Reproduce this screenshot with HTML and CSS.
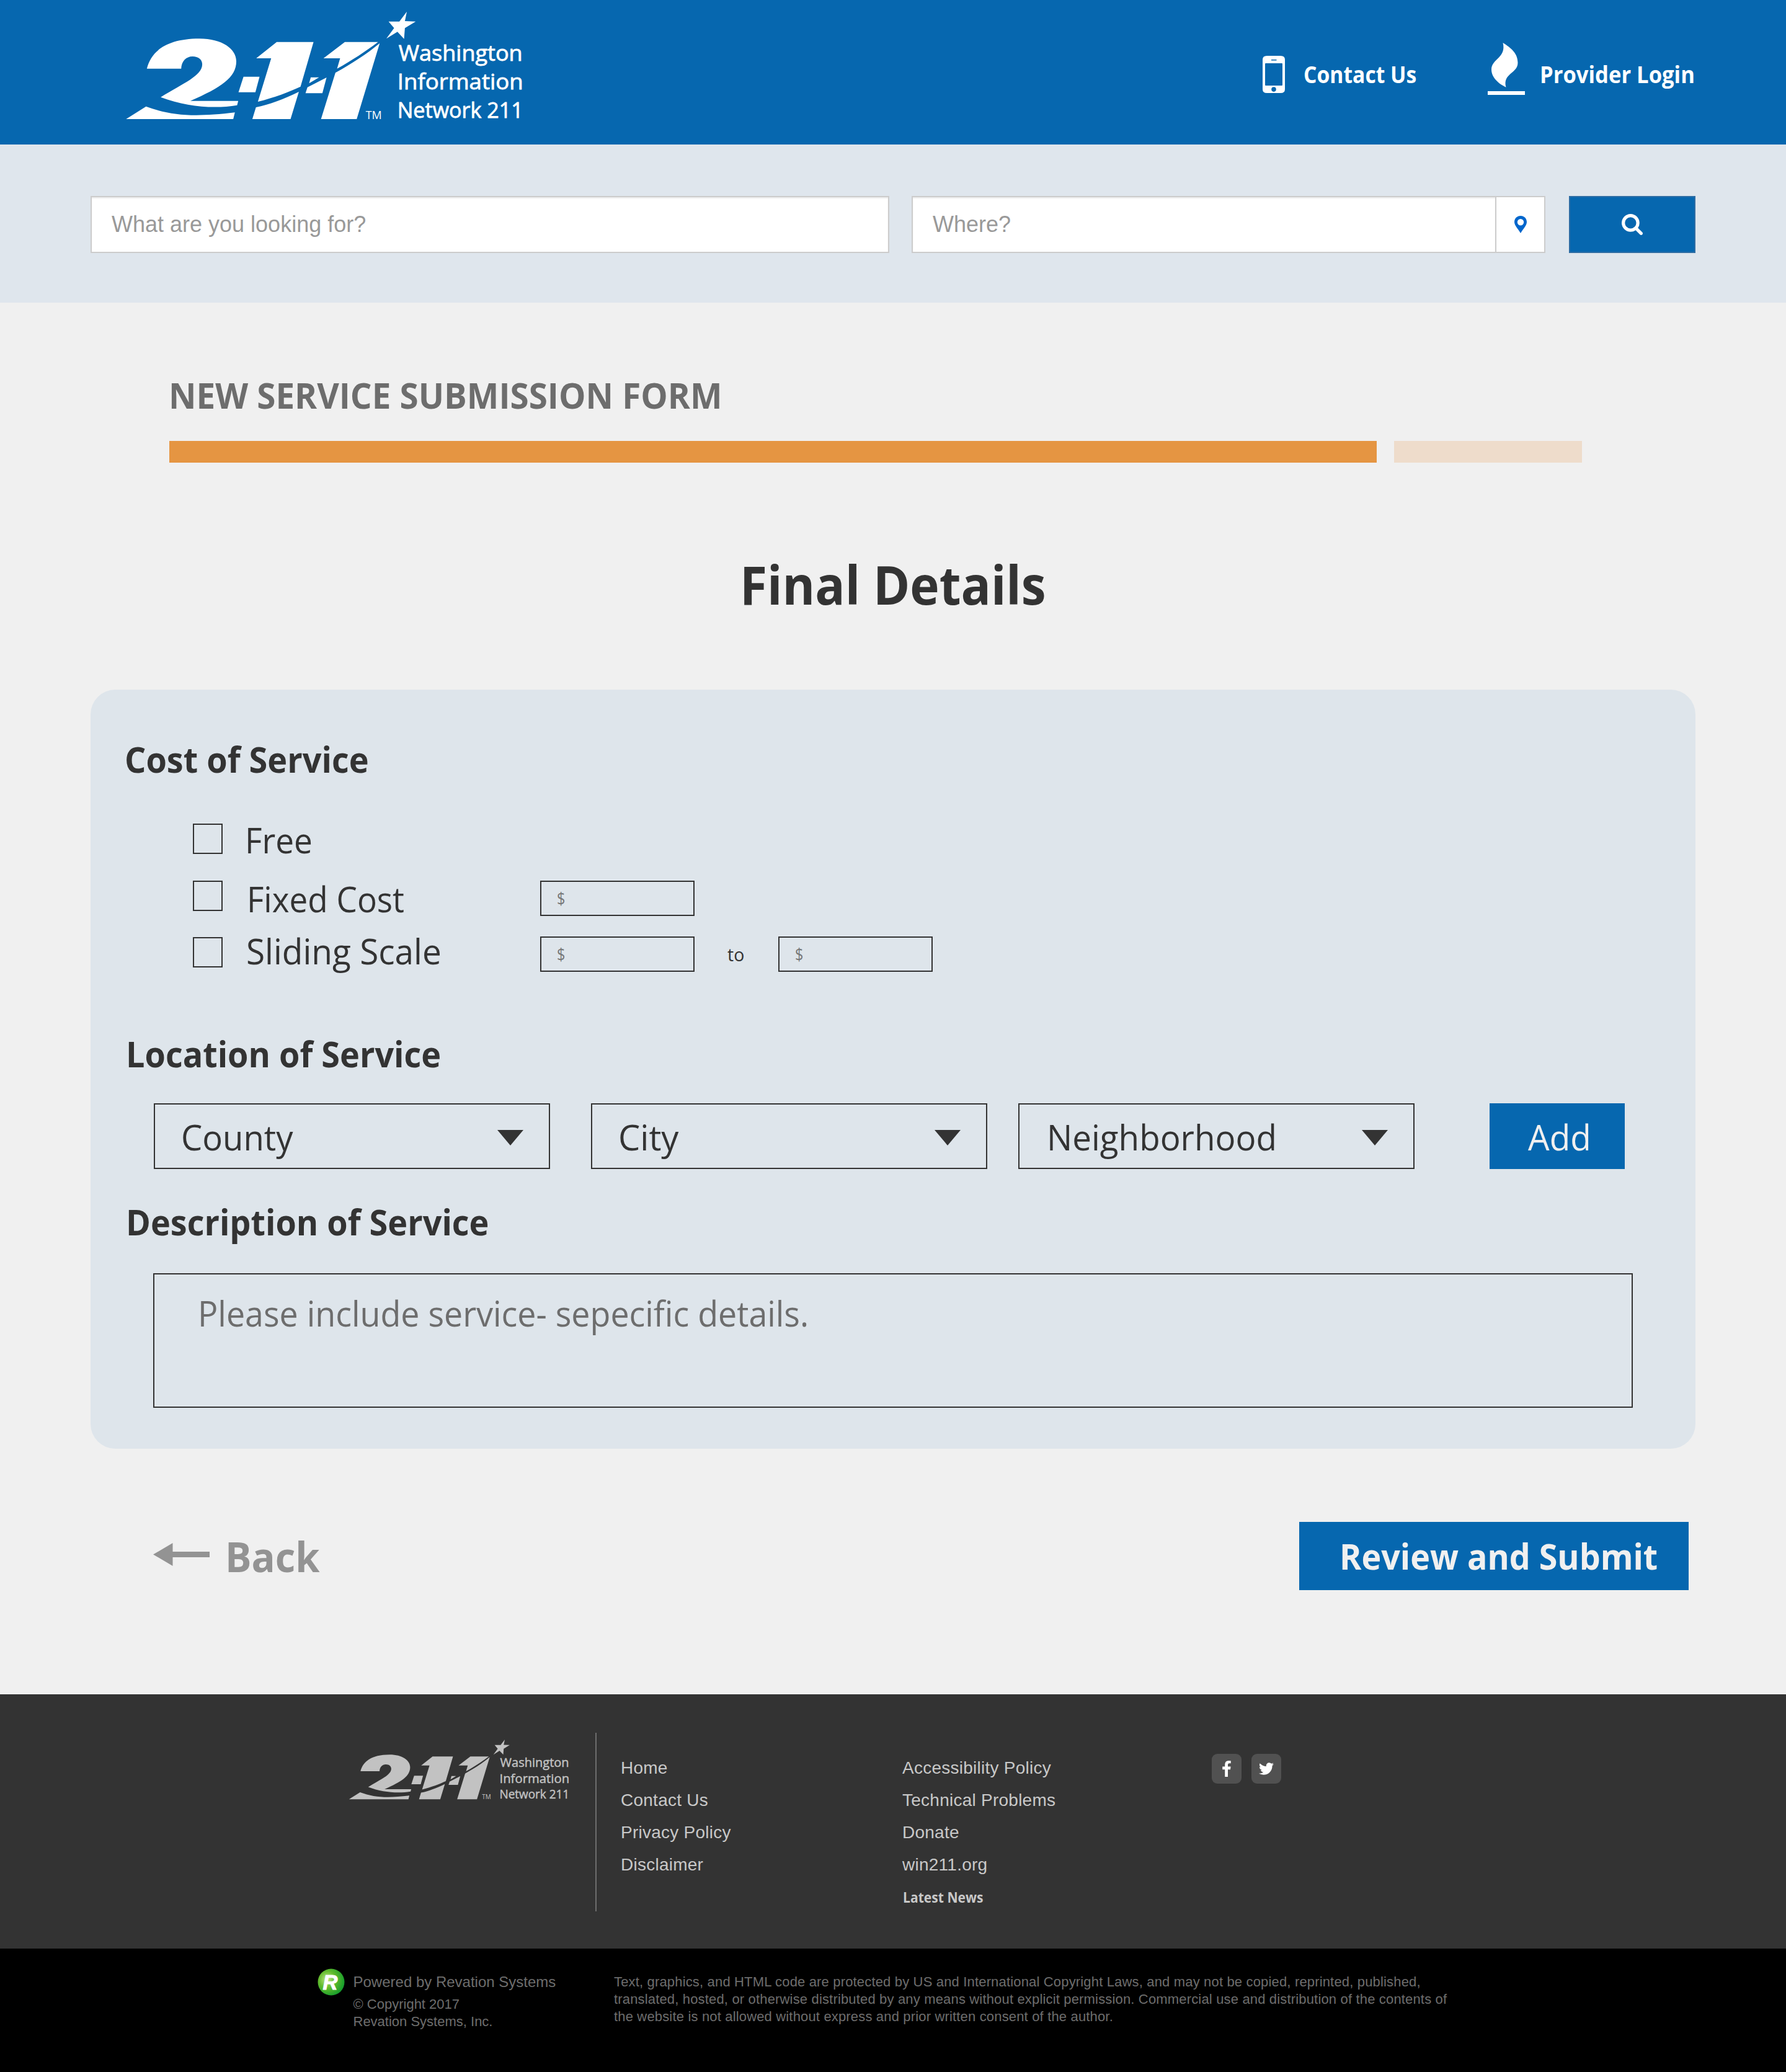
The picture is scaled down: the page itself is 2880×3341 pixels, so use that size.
FILE: index.html
```html
<!DOCTYPE html>
<html lang="en">
<head>
<meta charset="utf-8">
<title>New Service Submission Form</title>
<link rel="stylesheet" href="styles.css">
</head>
<body>
<svg class="defs" aria-hidden="true">
  <symbol id="logo" viewBox="50 50 1440 530" preserveAspectRatio="none">
    <g fill="currentColor">
      <path d="M128 331C143 250 196 186 318 186C400 186 451 236 451 296C451 374 395 423 285 487L458 487L454 508C370 527 270 515 178 469C260 401 328 365 328 310C328 287 314 272 293 272C270 272 253 295 252 331Z"/>
      <path d="M53 575L125 514C220 560 300 566 446 543L440 575Z"/>
      <path d="M477 370H535L520 445H459Z"/>
      <path d="M597 202H730L683 418C640 445 590 470 529 491L577 281H523Z"/>
      <path d="M677 443L647 575H509L522 518C570 505 620 480 677 443Z"/>
      <path d="M720 373H750L714 402Z"/>
      <path d="M777 374L762 450H701L708 421Z"/>
      <path d="M843 202H963C915 250 870 290 815 331L826 281H766Z"/>
      <path d="M969 208L886 575H757L809 351C870 305 920 262 969 208Z"/>
      <path d="M1067 55L1060 101L1099 103L1060 135L1057 187L1033 153L993 186L1021 135L1001 103H1040Z"/>
      <g transform="scale(2.24 3)" font-family="'Open Sans', sans-serif">
        <g font-size="35.5" stroke="currentColor" stroke-width=".8">
          <text x="463" y="97.7" textLength="200" lengthAdjust="spacingAndGlyphs">Washington</text>
          <text x="461" y="143.7" textLength="203" lengthAdjust="spacingAndGlyphs">Information</text>
          <text x="461" y="189.7" textLength="203" lengthAdjust="spacingAndGlyphs">Network 211</text>
        </g>
        <text x="410" y="191.3" font-size="18.6" textLength="26" lengthAdjust="spacingAndGlyphs">TM</text>
      </g>
    </g>
  </symbol>
</svg>

<header class="top">
  <svg class="logo"><use href="#logo"/></svg>
  <nav class="top-nav">
    <a class="top-link">
      <svg class="phone" viewBox="0 0 36 60"><path fill="#fff" fill-rule="evenodd" d="M7 0H29Q36 0 36 6V54Q36 60 29 60H7Q0 60 0 54V6Q0 0 7 0ZM14 6V7.6H22.500V6ZM4 13V47Q4 48 5 48H31Q32 48 32 47V13Q32 12 31 12H5Q4 12 4 13ZM18 50.300A3.800 3.800 0 1 0 18 57.900A3.800 3.800 0 1 0 18 50.300Z"/></svg>
      <span class="fit contact">Contact Us</span>
    </a>
    <a class="top-link">
      <svg class="flame" viewBox="0 0 60 84"><path fill="#fff" d="M24.500 0C37.500 8 48.500 17 48.500 32C48.500 50 23.500 49 29.500 71.700C17.500 66 6 56 6 43C6 26 30.500 24 24.500 0ZM0 78H60V84H0Z"/></svg>
      <span class="fit provider">Provider Login</span>
    </a>
  </nav>
</header>

<section class="search">
  <div class="search-box what">What are you looking for?</div>
  <div class="where-group">
    <div class="search-box where">Where?</div>
    <div class="pin"><svg viewBox="0 0 20 28"><path fill="#0066cc" fill-rule="evenodd" d="M10 0C4.300 0 0 4.300 0 10C0 15.500 6 21 10 28C14 21 20 15.500 20 10C20 4.300 15.700 0 10 0ZM10 5A5.200 5.200 0 1 1 10 15.400A5.200 5.200 0 1 1 10 5Z"/></svg></div>
  </div>
  <div class="search-btn"><svg viewBox="64 128 1664 1664"><path fill="#fff" d="M1216 832q0-185-131.500-316.500t-316.500-131.500-316.500 131.500-131.500 316.500 131.500 316.500 316.500 131.500 316.500-131.500 131.500-316.500zm512 832q0 52-38 90t-90 38q-54 0-90-38l-343-342q-179 124-399 124-143 0-273.500-55.500t-225-150-150-225-55.500-273.500 55.500-273.500 150-225 225-150 273.500-55.500 273.500 55.500 225 150 150 225 55.500 273.500q0 220-124 399l343 343q37 37 37 90z"/></svg></div>
</section>

<main>
  <h1 class="form-title"><span class="fit">NEW SERVICE SUBMISSION FORM</span></h1>
  <div class="progress"><div class="done"></div><div class="left"></div></div>
  <h2 class="step-title"><span class="fit">Final Details</span></h2>

  <section class="panel">
    <h3 class="cost-title"><span class="fit">Cost of Service</span></h3>
    <div class="costs">
      <div class="cost free"><i class="check"></i><span class="fit label">Free</span></div>
      <div class="cost fixed"><i class="check"></i><span class="fit label">Fixed Cost</span><div class="money"><span class="fit">$</span></div></div>
      <div class="cost sliding"><i class="check"></i><span class="fit label">Sliding Scale</span><div class="money"><span class="fit">$</span></div><span class="to">to</span><div class="money"><span class="fit">$</span></div></div>
    </div>

    <h3 class="location-title"><span class="fit">Location of Service</span></h3>
    <div class="places">
      <div class="select county"><span class="fit">County</span><svg viewBox="0 0 42 25"><path d="M0 0H42L21 25Z"/></svg></div>
      <div class="select city"><span class="fit">City</span><svg viewBox="0 0 42 25"><path d="M0 0H42L21 25Z"/></svg></div>
      <div class="select hood"><span class="fit">Neighborhood</span><svg viewBox="0 0 42 25"><path d="M0 0H42L21 25Z"/></svg></div>
      <div class="add"><span class="fit">Add</span></div>
    </div>

    <h3 class="desc-title"><span class="fit">Description of Service</span></h3>
    <div class="textarea"><span class="fit">Please include service- sepecific details.</span></div>
  </section>

  <div class="actions">
    <a class="back"><svg viewBox="0 0 91 37"><path fill="#939393" d="M0 18.500L31.500 0V14H91V23H31.500V37Z"/></svg><span class="fit">Back</span></a>
    <a class="submit"><span class="fit">Review and Submit</span></a>
  </div>
</main>

<footer class="foot">
  <svg class="foot-logo"><use href="#logo"/></svg>
  <div class="divider"></div>
  <ul class="links first"><li>Home</li><li>Contact Us</li><li>Privacy Policy</li><li>Disclaimer</li></ul>
  <ul class="links second"><li>Accessibility Policy</li><li>Technical Problems</li><li>Donate</li><li>win211.org</li><li class="news"><span class="fit">Latest News</span></li></ul>
  <div class="social">
    <a><svg class="fb" viewBox="479 0 864 1664"><path fill="#fff" d="M1343 12v264h-157q-86 0-116 36t-30 108v189h293l-39 296h-254v759h-306v-759h-255v-296h255v-218q0-186 104-288.500t277-102.500q147 0 228 12z"/></svg></a>
    <a><svg class="tw" viewBox="108 256 1576 1280"><path fill="#fff" d="M1684 408q-67 98-162 167 1 14 1 42 0 130-38 259.500t-115.500 248.500-184.500 210.500-258 146-323 54.500q-271 0-496-145 35 4 78 4 225 0 401-138-105-2-188-64.500t-114-159.500q33 5 61 5 43 0 85-11-112-23-185.500-111.500t-73.500-205.500v-4q68 38 146 41-66-44-105-115t-39-154q0-88 44-163 121 149 294.500 238.500t371.500 99.500q-8-38-8-74 0-134 94.500-228.500t228.500-94.500q140 0 236 102 109-21 205-78-37 115-142 178 93-10 186-50z"/></svg></a>
  </div>
</footer>

<div class="legal">
  <svg class="badge" viewBox="0 0 44 44">
    <defs><radialGradient id="green" cx=".35" cy=".4" r=".7"><stop offset="0" stop-color="#c4e88a"/><stop offset=".45" stop-color="#62bb2c"/><stop offset="1" stop-color="#0c9a2c"/></radialGradient></defs>
    <circle cx="22" cy="22" r="21.500" fill="url(#green)"/>
    <text x="8.500" y="34" font-family="'Liberation Sans', sans-serif" font-size="33" font-weight="700" font-style="italic" fill="#fff" stroke="#fff" stroke-width="1">R</text>
  </svg>
  <div class="owner">
    <p class="powered">Powered by Revation Systems</p>
    <p>© Copyright 2017</p>
    <p>Revation Systems, Inc.</p>
  </div>
  <p class="notice">Text, graphics, and HTML code are protected by US and International Copyright Laws, and may not be copied, reprinted, published,<br>translated, hosted, or otherwise distributed by any means without explicit permission. Commercial use and distribution of the contents of<br>the website is not allowed without express and prior written consent of the author.</p>
</div>
</body>
</html>
```
FILE: styles.css
```css
* { box-sizing: border-box; margin: 0; padding: 0; }

body {
  width: 2880px;
  background: #f0f0f0;
  color: #333;
  font-family: "Open Sans", sans-serif;
}

svg { display: block; flex: none; }
ul { list-style: none; }
.defs { display: none; }

/* Slightly narrowed lettering; each use sets its own ratio in --sx. */
.fit {
  display: inline-block;
  white-space: nowrap;
  transform: scaleX(var(--sx, 1));
  transform-origin: 0 50%;
}

/* Header */
.top {
  display: flex;
  align-items: flex-start;
  justify-content: space-between;
  height: 233px;
  padding: 16.700px 131px 0 202.300px;
  background: #0667af;
  color: #fff;
}
.logo { width: 642.900px; height: 176.700px; overflow: visible; }
.top-nav { display: flex; gap: 97px; margin-top: 52px; }
.top-link {
  display: flex;
  align-items: flex-start;
  height: 84px;
  font-size: 37px;
  font-weight: 700;
  line-height: 50px;
}
.top-link .fit { margin-top: 26px; }
.phone { width: 36px; height: 60px; margin: 21.300px 30px 0 0; }
.flame { width: 60px; height: 84px; margin-right: 24px; }
.contact { --sx: .91; margin-right: -1px; }
.provider { --sx: .935; margin-right: -1px; }

/* Search */
.search {
  display: flex;
  height: 255px;
  padding: 83px 146px 0;
  background: #dfe6ed;
}
.search-box {
  height: 92px;
  padding-left: 32px;
  border: 2px solid #ccc;
  background: #fff;
  box-shadow: inset 0 2px 2px rgba(0, 0, 0, .075);
  color: #999;
  font: 36px/88px "Liberation Sans", sans-serif;
}
.what { width: 1288px; margin-right: 36px; }
.where-group { display: flex; width: 1022px; margin-right: 38px; }
.where { flex: 1; border-right: 0; }
.pin {
  display: flex;
  align-items: center;
  justify-content: center;
  width: 81px;
  height: 92px;
  border: 2px solid #ccc;
  background: #fff;
}
.pin svg { width: 20px; height: 28px; }
.search-btn {
  display: flex;
  align-items: center;
  justify-content: center;
  width: 204px;
  height: 92px;
  border: 2px solid #2e6da4;
  background: #0667af;
}
.search-btn svg { width: 34px; height: 34px; }

/* Form */
main { height: 2244px; padding: 119px 146px 0; }
.form-title {
  --sx: .96;
  margin-left: 126px;
  color: #6d6d6d;
  font-size: 57px;
  line-height: 60px;
}
.progress { display: flex; gap: 28px; height: 35px; margin: 44px 0 0 127px; }
.done { width: 1947px; background: #e59542; }
.left { width: 303px; background: #eedccb; }
.step-title {
  --sx: .939;
  margin: 146px 0 120px;
  font-size: 85.400px;
  line-height: 100px;
  text-align: center;
}
.step-title .fit { transform-origin: 50% 50%; }

.panel {
  height: 1224px;
  padding: 83px 55px 0;
  border-radius: 40px;
  background: #dee5eb;
}
.panel h3 { font-size: 56.500px; line-height: 60px; height: 60px; }
.cost-title { --sx: .956; }
.location-title { --sx: .955; margin: 99px 0 49px 2px; }
.desc-title { --sx: .955; margin: 56px 0 52px 2px; }

.costs { margin: 73px 0 0 110px; }
.cost {
  display: grid;
  grid-template-columns: 48px 512px 249px 135px 249px;
  align-items: start;
  height: 92px;
}
.check { width: 48px; height: 49px; border: 2px solid #333; }
.label { font-size: 56px; line-height: 60px; }
.free .label { --sx: .95; margin: -4px 0 0 36px; }
.fixed { height: 91px; }
.fixed .label { --sx: .947; margin: -1px 0 0 39px; }
.sliding { height: 60px; }
.sliding .label { --sx: .981; margin: -8px 0 0 38px; }
.money {
  --sx: .84;
  height: 57px;
  padding-left: 25px;
  border: 2px solid #333;
  color: #777;
  font-size: 28px;
  line-height: 53px;
}
.sliding .money { margin-top: -1px; }
.to { padding-left: 53px; font-size: 28.500px; line-height: 57px; }

.places { display: flex; height: 106px; margin-left: 47px; font-size: 56px; line-height: 60px; }
.select {
  display: flex;
  align-items: center;
  justify-content: space-between;
  width: 639px;
  padding: 2px 41px 0 42px;
  border: 2px solid #333;
}
.select svg { width: 42px; height: 25px; margin-top: 3px; fill: #333; }
.county { --sx: .972; }
.city { margin: 0 50px 0 66px; padding-left: 42px; }
.hood { --sx: .978; padding-left: 44px; }
.add {
  --sx: .978;
  width: 218px;
  margin-left: 121px;
  padding: 24px 0 0 62px;
  background: #0667af;
  color: #f0f0f0;
}

.textarea {
  --sx: .9595;
  width: 2386px;
  height: 217px;
  margin-left: 46px;
  padding: 32px 70px;
  border: 2px solid #333;
  color: #6d6d6d;
  font-size: 56px;
  line-height: 60px;
}

.actions {
  display: flex;
  justify-content: space-between;
  margin-top: 118px;
  padding: 0 11px 0 101px;
  font-weight: 700;
}
.back {
  --sx: .952;
  display: flex;
  align-items: center;
  height: 110px;
  color: #939393;
  font-size: 66.500px;
  line-height: 80px;
}
.back svg { width: 91px; height: 37px; margin: -6px 25px 0 0; }
.submit {
  --sx: .943;
  width: 628px;
  height: 110px;
  padding-left: 65px;
  background: #0667af;
  color: #f0f0f0;
  font-size: 57px;
  line-height: 110px;
}

/* Footer */
.foot {
  display: flex;
  align-items: flex-start;
  height: 410px;
  padding: 62px 0 0 561.600px;
  background: #333;
  color: #c8c8c8;
}
.foot-logo { width: 356.800px; height: 98.100px; margin-top: 10px; color: #c2c2c2; overflow: visible; }
.divider { width: 2px; height: 288px; margin-left: 41.600px; background: #6d6d6d; }
.links { padding-top: 30.500px; font: 28px/52px "Liberation Sans", sans-serif; letter-spacing: .25px; }
.first { width: 454px; margin-left: 39px; }
.second { width: 499px; }
.news { --sx: .917; padding-left: 1px; font: 700 23px/52px "Open Sans", sans-serif; letter-spacing: 0; }
.social { display: flex; gap: 16px; margin-top: 34px; }
.social a {
  display: flex;
  align-items: center;
  justify-content: center;
  width: 48px;
  height: 48px;
  border-radius: 9px;
  background: #515151;
}
.fb { width: 14px; height: 26px; }
.tw { width: 24px; height: 20px; }

.legal {
  display: flex;
  align-items: flex-start;
  height: 199px;
  padding: 32px 0 0 511.500px;
  background: #000;
  color: #6d6d6d;
  font: 22px/28px "Liberation Sans", sans-serif;
  white-space: nowrap;
}
.badge { width: 44px; height: 44px; }
.owner { width: 420.500px; margin-left: 14px; padding-top: 8px; }
.powered { margin-bottom: 8px; font-size: 24px; }
.notice { padding-top: 8px; letter-spacing: .165px; }
```
